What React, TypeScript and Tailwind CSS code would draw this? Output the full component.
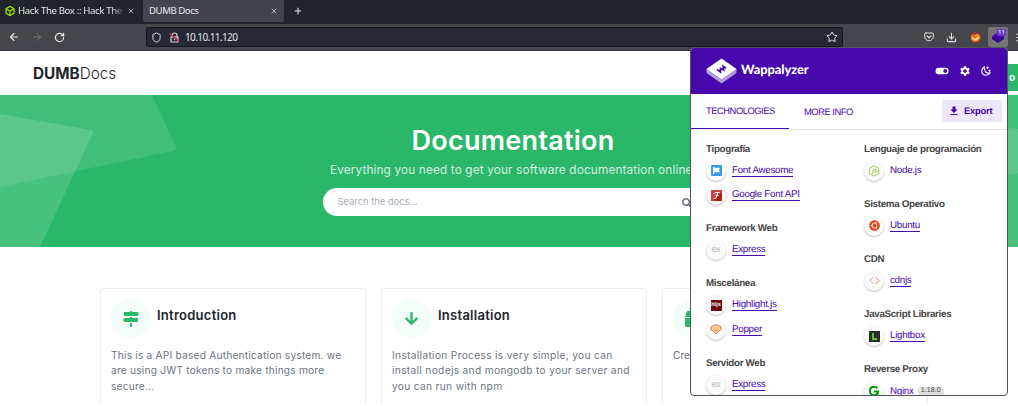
import React from "react";
import { FaArrowDown, FaBox, FaMapSigns, FaSearch, FaUbuntu } from "react-icons/fa";
import { MdDownload, MdSettings } from "react-icons/md";
import { SiHackthebox } from "react-icons/si";
import { ArrowLeft, ArrowRight, Download, Menu, Plus, RotateCw, Shield, Star, X } from "lucide-react";

function BrowserChrome() {
  return (
    <header className="font-['Noto_Sans',sans-serif] text-[9.7px] tracking-[-0.4px] text-[#e4e4e8]">
      <div className="flex h-6 items-start bg-[#22242c]">
        <div className="flex h-[22px] w-[143px] items-center pl-[5px]">
          <SiHackthebox className="size-[10px] shrink-0 text-[#9fef00]" strokeWidth={0.8} stroke="currentColor" />
          <span className="ml-[3px] w-[108px] whitespace-nowrap [mask-image:linear-gradient(90deg,#000_86%,transparent)]">Hack The Box :: Hack The</span>
          <X className="ml-px size-[8px] text-[#c8c8cc]" strokeWidth={2.5} />
        </div>
        <div className="flex h-[22px] w-[141px] items-center justify-between rounded-b-[2px] bg-[#42444b] pl-[6px] pr-[6px]">
          <span className="tracking-[-0.5px]">DUMB Docs</span>
          <X className="size-[8px] text-[#c8c8cc]" strokeWidth={2.5} />
        </div>
        <Plus className="ml-[9px] mt-[6px] size-[10px]" strokeWidth={2.6} />
      </div>
      <div className="flex h-[27px] items-center border-b border-[#33353b] bg-[#45464b]">
        <ArrowLeft className="ml-[8px] size-[12px] shrink-0" strokeWidth={2.2} />
        <ArrowRight className="ml-[11px] size-[12px] shrink-0 text-[#7b7c81]" />
        <RotateCw className="ml-[11px] size-[11px] shrink-0" strokeWidth={2.6} />
        <div className="ml-[81px] flex h-5 w-[697px] shrink-0 items-center rounded-[2px] border border-[#17181e] bg-[#262833] pl-[4px] pr-[4px]">
          <Shield className="size-[11px]" />
          <svg className="ml-[7px] size-[11px]" viewBox="0 0 11 11" fill="none">
            <path d="M3 5V3.500a2.500 2.500 0 0 1 5 0V5M2 5.200h7V10H2zM5.500 6.700v1.500" stroke="#cfcfd4" strokeWidth="1.200" />
            <path d="m.5 1.500 9.500 8" stroke="#e22850" strokeWidth="1.200" />
          </svg>
          <span className="ml-[5px] text-[10px] tracking-[-0.6px]">10.10.11.120</span>
          <Star className="ml-auto size-[12px]" />
        </div>
        <svg className="ml-[81px] shrink-0" width="10" height="10" viewBox="0 0 10 10" fill="none" stroke="#dcdce0" strokeLinecap="round">
          <path d="M1.500 1h7q.8 0 .8.8v2.700a4.300 4.300 0 0 1-8.600 0V1.800q0-.8.8-.8z" strokeWidth="1" /><path d="M3 3.900l2 1.900 2-1.900" strokeWidth="1.200" />
        </svg>
        <Download className="ml-[12px] size-[11px] shrink-0" strokeWidth={2.2} />
        <svg className="ml-[13px] shrink-0" width="11" height="11" viewBox="0 0 11 11">
          <path d="M.8 4 2 1.500l2 1.200L7 2l3 .5.3 4L8 9.500 4 10 1 7.500z" fill="#ef8b28" />
          <path d="M2 5.500 5 6.800 9 4.500 7.500 8 4.500 8.500z" fill="#ffdf9a" />
          <path d="M1 3.500A5 5 0 0 1 10.200 4M10 7.500A5 5 0 0 1 2 9" fill="none" stroke="#c52b2b" strokeWidth="1.100" /><path d="m2.500 2.500 3 3" stroke="#c52b2b" />
        </svg>
        <div className="relative ml-[7px] h-[20px] w-[20px] shrink-0 rounded-[2px] bg-[#737378]">
          <svg className="absolute left-[4px] top-[4px]" width="12" height="12" viewBox="0 0 12 12"><path d="m6 3 6 3.500v1.500L6 12 0 8V6.500z" fill="#2b0a78" /><path d="m6 1 6 4.500-6 4.200-6-4.200z" fill="#4608ad" /></svg>
          <span className="absolute right-[2px] top-[2px] h-[7px] w-[9px] rounded-[1px] bg-[#6b39c8] text-center text-[6px] leading-[7px] tracking-normal text-white">11</span>
        </div>
        <Menu className="ml-[7px] size-[11px] shrink-0" strokeWidth={2.2} />
      </div>
    </header>
  );
}

type CardProps = { icon: React.ReactNode; title?: string; lines: string[]; tracking: string };
function Card({ icon, title, lines, tracking }: CardProps) {
  return (
    <article className="h-[130px] w-[266px] shrink-0 rounded-[3px] border border-[#eceef0] bg-white px-[10px] pt-[10px] shadow-[0_0_2px_#0000000a]">
      <div className="flex h-[39px] items-center">
        <span className="grid size-[39px] place-items-center rounded-full bg-[#f3fcf6] text-[#2ab76a]">{icon}</span>
        {title && <h2 className="ml-[7px] pb-[6px] text-[13px] font-semibold tracking-[0.26px] text-[#212529]">{title}</h2>}
      </div>
      <div className={"mt-[10px] text-[10.2px] leading-[15.3px] text-[#6b7585] " + tracking}>
        {lines.map((l) => <p key={l} className="whitespace-nowrap">{l}</p>)}
      </div>
    </article>
  );
}

function Docs() {
  return (
    <main className="font-[Inter,sans-serif]">
      <div className="flex h-[44px] items-center justify-between pl-[33px] text-[15.3px] text-[#212529]">
        <div className="pt-[2px]"><b className="font-bold">DUMB</b><span className="font-light">Docs</span></div>
        <div className="mt-[9px] flex h-[27px] w-[60px] items-center justify-end bg-[#2ab76a] pr-[3px] text-[10px] font-semibold text-white">o</div>
      </div>
      <section className="relative h-[152px] bg-[#2ab76a]">
        <svg className="absolute inset-0" width="1018" height="152" viewBox="0 0 1018 152" fill="#fff">
          <path opacity=".11" d="M0 0h152l24 52q0 3-3 4L0 92z" />
          <path opacity=".14" d="M0 19l92 16q2 1 1 3L40 152H0z" />
          <path opacity=".11" d="M1000 0h18v78l-18 3z" />
          <path opacity=".14" d="M1000 32l18 2v118h-18z" />
        </svg>
        <div className="relative flex flex-col items-center">
          <h1 className="mt-[29px] ml-2 text-[27px] leading-[34px] font-semibold tracking-[0.25px] text-white">Documentation</h1>
          <p className="mt-[3px] ml-2 text-[11.8px] leading-[18px] tracking-[0.14px] text-[#d3f1e0]">Everything you need to get your software documentation online.</p>
          <div className="mt-[9px] ml-2 flex h-[28px] w-[381px] items-center justify-between rounded-full bg-white pl-[15px] pr-[12px] text-[9.5px] tracking-[-0.07px] text-[#a8afba]">
            <span className="pt-px">Search the docs...</span><FaSearch className="mt-px size-[10px] text-[#6b7585]" />
          </div>
        </div>
      </section>
      <section className="flex h-[156px] gap-[15px] overflow-hidden pl-[100px] pt-[41px]">
        <Card icon={<FaMapSigns className="size-[16px]" />} title="Introduction" tracking="tracking-[0.2px]" lines={["This is a API based Authentication system. we", "are using JWT tokens to make things more", "secure..."]} />
        <Card icon={<FaArrowDown className="size-[15px]" />} title="Installation" tracking="tracking-[0.32px]" lines={["Installation Process is very simple, you can", "install nodejs and mongodb to your server and", "you can run with npm"]} />
        <Card icon={<FaBox className="size-[16px]" />} tracking="tracking-normal" lines={["Cre"]} />
      </section>
    </main>
  );
}

const icons: Record<string, React.ReactNode> = {
  "Font Awesome": <svg width="11" height="11" viewBox="0 0 11 11"><rect width="11" height="11" rx="1.2" fill="#339af0" /><path d="M2 2h1.200v.8H9L8 5l1 2.300H3.200V9.200H2z" fill="#fff" /></svg>,
  "Google Font API": <svg width="11" height="11" viewBox="0 0 11 11"><path fill="#d43c35" d="M0 0h11v11H0z" /><path fill="#a62420" d="m9 2 2 2v7H5L3 9z" /><path d="M3 3.8Q3.4 2.4 5 2.6q2 .4 4-.4M6.8 2.8 5 8Q4 9 2.6 8.2M4.6 5.4h3" fill="none" stroke="#fff" strokeWidth="1" /></svg>,
  Express: <span className="font-[Inter,sans-serif] text-[9px] font-light leading-[10px] tracking-[-0.5px] text-[#aaa]">ex</span>,
  "Highlight.js": <span className="grid h-[11px] w-[11px] place-items-center bg-[#6b0c12] text-[5.5px] font-bold leading-none text-white">hljs</span>,
  Popper: <svg width="12" height="11" viewBox="0 0 12 11"><path d="M3.5 7Q.6 6.7.8 4.3 1 2 3.2 1.800 4.500.2 6 1.300q2-.9 3 .5 2.400.2 2.200 2.600Q11 6.700 8.500 7L6 10z" fill="#ffd58c" stroke="#d8654f" strokeWidth=".9" /><path d="M4 4.100h.8M7.300 4.100h.8M4.600 6q1.400.9 2.800 0" stroke="#b94e45" fill="none" strokeWidth=".7" /></svg>,
  "Node.js": <svg width="12" height="12" viewBox="0 0 12 12" fill="none" stroke="#8cc84b" strokeWidth=".9"><path d="m6 .8 4.600 2.600v5.200L6 11.200 1.400 8.600V3.400zM5 4v3.600q0 1-1.500.7M8.800 4.700q-2-.7-2 .4 0 .7 1.100.8 1.100.1 1 .9-.2 1.200-2.300.5" /></svg>,
  Ubuntu: <FaUbuntu className="size-[11px] text-[#dd4814]" />,
  cdnjs: <svg width="11" height="9" viewBox="0 0 11 9" fill="none" strokeWidth="1"><path d="M4.500 1 1 4.500 4.500 8" stroke="#b8b0ae" /><path d="M6.500 1 10 4.500 6.500 8" stroke="#f08364" /></svg>,
  Lightbox: <svg width="11" height="11" viewBox="0 0 11 11"><path fill="#2d2d2d" d="M0 0h11v11H0z" /><path d="M4 2v6.200h4" fill="none" stroke="#6fd044" strokeWidth="1.700" /></svg>,
  Nginx: <svg width="12" height="12" viewBox="0 0 12 12"><path d="M9.500 3.200Q8 1.700 6 1.700 2 1.700 2 6t4 4.300q4 0 4-3.700H6" fill="none" stroke="#009900" strokeWidth="2" /></svg>,
};

function Group({ title, items }: { title: string; items: string[] }) {
  return (
    <div className="mb-[11.6px]">
      <h3 className="flex h-[19px] items-center whitespace-nowrap pt-[3px] text-[9.8px] font-bold tracking-[-0.32px] text-[#454545]">{title}</h3>
      {items.map((name) => (
        <div key={name} className="flex h-[24.5px] items-center">
          <span className="mt-px grid size-[20px] place-items-center rounded-full bg-[#fafafa] shadow-[0_1px_2px_#00000040]">{icons[name]}</span>
          <span className={"mt-px ml-[6px] text-[9.8px] leading-[11px] tracking-[-0.28px] text-[#4608ad] " + (name === "Node.js" || name === "Nginx" ? "" : "border-b border-[#4608ad]")}>{name}</span>
          {name === "Nginx" && <span className="ml-[4px] mt-px rounded-[2px] bg-[#dfdfdf] px-[3px] text-[7px] leading-[8px] tracking-[0.1px] text-[#444]">1.18.0</span>}
        </div>
      ))}
    </div>
  );
}

function Wappalyzer() {
  return (
    <aside className="absolute left-[690px] top-[47px] h-[349px] w-[318px] overflow-hidden rounded-[4px] border border-[#55535c] bg-white font-['Liberation_Sans',sans-serif] text-[#4608ad] [text-rendering:geometricPrecision]">
      <div className="flex h-[46px] items-center bg-[#4608ad] pl-[15px] pr-[16px] text-white">
        <svg width="31" height="26" viewBox="0 0 31 26">
          <path d="m.5 11 15 10.500 15-10.500v4L15.500 25.500.5 15z" fill="#b49add" />
          <path d="M15.500.5l15 10.500-15 10.500L.5 11z" fill="#fff" />
          <path d="m11 11.300 3.400 2.700.1-3.500 3.200 1.500-.6-3.700 2.900 1.900" fill="none" stroke="#4608ad" strokeWidth="1.700" />
        </svg>
        <span className="ml-[4px] pb-[2px] font-[Lato,sans-serif] text-[12.8px] font-black tracking-[-0.05px]">Wappalyzer</span>
        <svg className="ml-auto" width="14" height="8" viewBox="0 0 14 8"><rect x=".5" y=".7" width="13" height="6.600" rx="3.300" fill="#fff" /><circle cx="10.200" cy="4" r="2" fill="#4608ad" /></svg>
        <MdSettings className="ml-[10px] size-[12px]" />
        <svg className="ml-[10px]" width="10" height="10" viewBox="0 0 10 10" fill="none" stroke="#fff"><path d="M3.200 1Q.6 2.400.7 5.200 1 9 5 9.300 7.600 9.200 9 7 3.500 8 3.200 1z" strokeWidth="1.100" /><path d="M6.500.5v2.400M5.300 1.700h2.400M8.500 3.500v2.400M7.300 4.700h2.400" strokeWidth="1" /></svg>
      </div>
      <div className="flex h-[36px] border-b border-[#e5e5e5] text-[9.4px] tracking-[-0.48px]">
        <div className="w-[98px] shrink-0 border-b-[1.5px] border-[#4608ad] pl-[15px] leading-[34px]">TECHNOLOGIES</div>
        <div className="ml-[15px] leading-[35px]">MORE INFO</div>
        <div className="ml-auto mr-[5px] mt-[6px] flex h-[22px] w-[60px] items-center rounded-[2px] bg-[#ece6f7] pl-[6px] text-[9.4px] font-bold tracking-[-0.2px]"><MdDownload className="mr-[4px] size-[12px]" />Export</div>
      </div>
      <div className="flex pl-[15px] pt-[9px]">
        <div className="w-[158px]">
          <Group title="Tipografía" items={["Font Awesome", "Google Font API"]} />
          <Group title="Framework Web" items={["Express"]} />
          <Group title="Miscelánea" items={["Highlight.js", "Popper"]} />
          <Group title="Servidor Web" items={["Express"]} />
        </div>
        <div>
          <Group title="Lenguaje de programación" items={["Node.js"]} />
          <Group title="Sistema Operativo" items={["Ubuntu"]} />
          <Group title="CDN" items={["cdnjs"]} />
          <Group title="JavaScript Libraries" items={["Lightbox"]} />
          <Group title="Reverse Proxy" items={["Nginx"]} />
        </div>
      </div>
    </aside>
  );
}

export default function App() {
  return (
    <div className="relative h-[406px] w-[1018px] overflow-hidden bg-white">
      <BrowserChrome />
      <Docs />
      <Wappalyzer />
    </div>
  );
}
